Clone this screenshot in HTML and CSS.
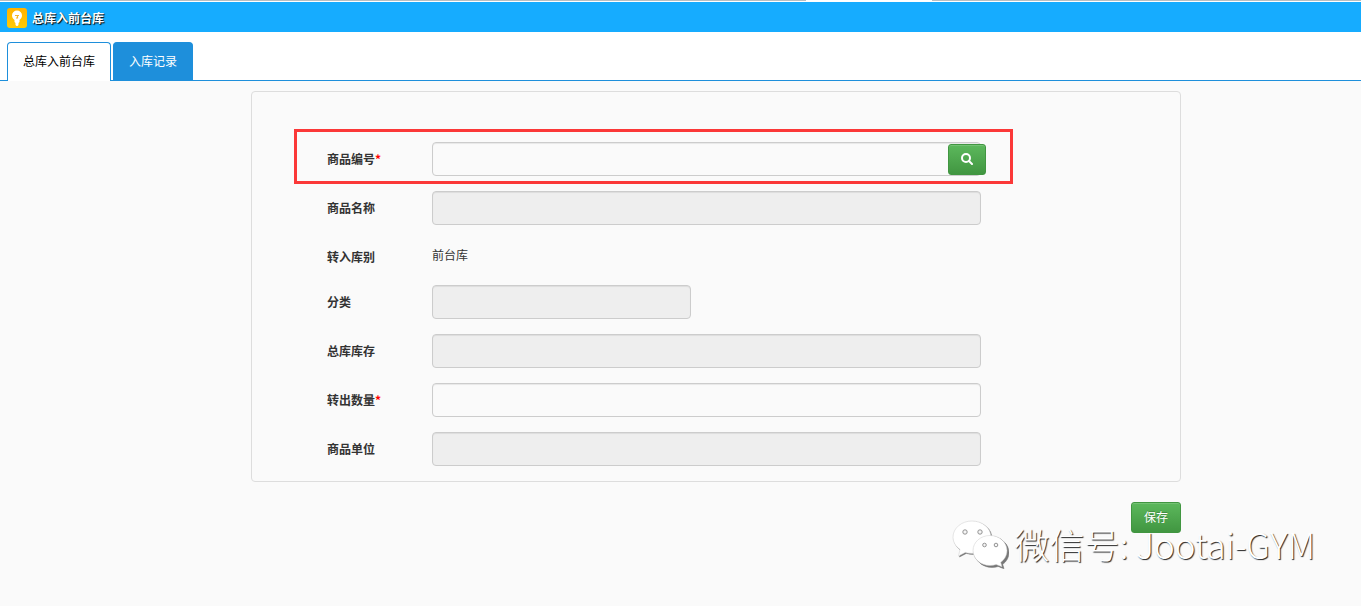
FILE: index.html
```html
<!DOCTYPE html>
<html lang="zh-CN">
<head>
  <meta charset="UTF-8">
  <meta name="viewport" content="width=device-width, initial-scale=1.0">
  <title>总库入前台库</title>
  <link rel="stylesheet" href="styles.css">
</head>
<body>
  <div class="top-line"><span></span></div>
  <header class="title-bar">
    <svg class="title-icon" width="20" height="20" viewBox="0 0 20 20">
      <defs>
        <linearGradient id="bulb" x1="0" y1="0" x2="0" y2="1">
          <stop offset="0" stop-color="#ffb100"/>
          <stop offset="1" stop-color="#ffcb05"/>
        </linearGradient>
      </defs>
      <rect width="20" height="20" rx="3" fill="url(#bulb)"/>
      <path d="M10 2.500a5 5 0 0 0-5 5c0 2 1 3 2.500 4.500V14l1 1v2l1 1h1l1-1v-2l1-1v-2c1.500-1.500 2.500-2.500 2.500-4.500a5 5 0 0 0-5-5z" fill="#fff"/>
      <path d="M8 7.500h4M10.500 7.500v2.500H9" fill="none" stroke="#f5b52a" stroke-width="1.200"/>
    </svg>
    <h1>总库入前台库</h1>
  </header>

  <nav class="tabs">
    <a href="#transfer" class="tab active">总库入前台库</a>
    <a href="#records" class="tab">入库记录</a>
  </nav>

  <form class="stock-form" id="transfer">
    <div class="panel">
      <div class="form-row highlight">
        <label for="goodsNo">商品编号<span class="required">*</span></label>
        <div class="control">
          <input type="text" id="goodsNo" name="goodsNo">
          <button type="button" class="btn search-button" aria-label="查询">
            <svg width="12" height="12" viewBox="0 0 12 12">
              <circle cx="5" cy="5" r="4" fill="none" stroke="#fff" stroke-width="2"/>
              <path d="M8 8L11 11" stroke="#fff" stroke-width="2" stroke-linecap="round"/>
            </svg>
          </button>
        </div>
      </div>
      <div class="form-row">
        <label for="goodsName">商品名称</label>
        <div class="control"><input type="text" id="goodsName" name="goodsName" readonly></div>
      </div>
      <div class="form-row text-row">
        <span class="label">转入库别</span>
        <div class="control"><p>前台库</p></div>
      </div>
      <div class="form-row">
        <label for="category">分类</label>
        <div class="control"><input type="text" id="category" name="category" class="short" readonly></div>
      </div>
      <div class="form-row">
        <label for="stock">总库库存</label>
        <div class="control"><input type="text" id="stock" name="stock" readonly></div>
      </div>
      <div class="form-row">
        <label for="amount">转出数量<span class="required">*</span></label>
        <div class="control"><input type="text" id="amount" name="amount"></div>
      </div>
      <div class="form-row">
        <label for="unit">商品单位</label>
        <div class="control"><input type="text" id="unit" name="unit" readonly></div>
      </div>
    </div>
    <div class="actions">
      <button type="submit" class="btn save-button">保存</button>
    </div>
  </form>

  <div class="watermark">
    <svg width="56" height="48" viewBox="0 0 56 48">
      <g fill="#fff" stroke="#ccc" stroke-width="0.500">
        <path d="M20 1C9.500 1 1 8.200 1 17.200c0 5 2.800 9.300 7 12.300L6.500 36l6.800-3.600c2.100.6 4.300 1 6.700 1 10.500 0 19-7.200 19-16.200S30.500 1 20 1z"/>
        <path class="front-bubble" d="M38 15.500c-9.400 0-17 6.700-17 15s7.600 15 17 15c2.200 0 4.300-.4 6.200-1l5.800 2.300-1.300-4.500c3.900-2.800 6.300-7 6.300-11.800 0-8.300-7.600-15-17-15z"/>
      </g>
      <g fill="#f6f6f6" stroke="#888" stroke-width="0.900">
        <circle cx="13" cy="12" r="2.200"/>
        <circle cx="28" cy="12" r="2.200"/>
        <circle cx="32.500" cy="25" r="1.800"/>
        <circle cx="44" cy="25" r="1.800"/>
      </g>
    </svg>
    <span>微信号: Jootai-GYM</span>
  </div>
</body>
</html>
```

FILE: styles.css
```css
* {
  box-sizing: border-box;
}

body {
  margin: 0;
  background-color: #fafafa;
  color: #333;
  font-family: "Noto Sans CJK SC", sans-serif;
  font-size: 12px;
  line-height: 20px;
}

.top-line {
  height: 2px;
  background-color: #fff;
  border-top: 1px solid #b9bec2;
}

.top-line span {
  display: block;
  width: 126px;
  height: 1px;
  margin: -1px 0 0 806px;
  background-color: #fff;
}

/* title */
.title-bar {
  display: flex;
  align-items: center;
  gap: 5px;
  height: 30px;
  padding: 1px 7px 0;
  background-color: #16acff;
}

.title-bar h1 {
  margin: 0;
  color: #fff;
  font-size: 12px;
  line-height: 20px;
  text-shadow: 1px 1px 1px #000;
}

/* tabs */
.tabs {
  display: flex;
  gap: 2px;
  padding: 10px 7px 0;
  background-color: #fff;
  border-bottom: 1px solid #1e8fdb;
}

.tab {
  height: 38px;
  padding: 8px 15px;
  border: 1px solid #1e8fdb;
  border-bottom: none;
  border-radius: 4px 4px 0 0;
  background-color: #1e8fdb;
  color: #fff;
  text-decoration: none;
}

.tab.active {
  height: 39px;
  margin-bottom: -1px;
  background-color: #fff;
  color: #000;
}

/* form */
.stock-form {
  margin: 10px 180px 0 251px;
}

.panel {
  display: flex;
  flex-direction: column;
  gap: 15px;
  padding: 50px 199px 15px 75px;
  border: 1px solid #ddd;
  border-radius: 4px;
}

.form-row {
  position: relative;
  display: flex;
  align-items: center;
}

.form-row label,
.form-row .label {
  width: 105px;
  font-weight: bold;
}

.required {
  color: #f00;
}

.control {
  position: relative;
  flex: 1;
}

.control input {
  display: block;
  width: 100%;
  height: 34px;
  padding: 6px 12px;
  border: 1px solid #ccc;
  border-radius: 4px;
  background-color: #fafafa;
  box-shadow: inset 0 1px 1px rgba(0, 0, 0, 0.075);
  font: inherit;
}

.control input[readonly] {
  background-color: #eee;
}

.control input.short {
  width: 259px;
}

.control p {
  margin: 0;
}

.text-row {
  height: 30px;
  align-items: flex-start;
}

.text-row .label {
  padding-top: 7px;
}

.text-row .control {
  padding-top: 5px;
}

.highlight::before {
  content: "";
  position: absolute;
  top: -13px;
  bottom: -8px;
  left: -33px;
  right: -32px;
  border: 3px solid #fb3838;
}

/* buttons */
.btn {
  border: 1px solid #419641;
  border-radius: 3px;
  background-image: linear-gradient(#5cb85c, #419641);
  box-shadow: inset 0 1px 0 rgba(255, 255, 255, 0.15);
  color: #fff;
  font: inherit;
  text-shadow: 0 -1px 0 rgba(0, 0, 0, 0.2);
  cursor: pointer;
}

.search-button {
  position: absolute;
  top: 2px;
  right: -5px;
  display: flex;
  align-items: center;
  justify-content: center;
  width: 38px;
  height: 31px;
  padding: 0 0 1px;
}

.actions {
  display: flex;
  justify-content: flex-end;
  margin-top: 20px;
}

.save-button {
  height: 31px;
  padding: 4px 12px 5px;
}

/* watermark */
.watermark {
  position: absolute;
  right: 46px;
  bottom: 38px;
  display: flex;
  align-items: center;
  gap: 6px;
  color: #fff;
  font-size: 35px;
  font-weight: 300;
  line-height: 48px;
  white-space: nowrap;
  text-shadow: 1px 1px 1px #222;
  pointer-events: none;
}

.watermark svg,
.front-bubble {
  filter: drop-shadow(1px 1px 0 #777);
}
```
